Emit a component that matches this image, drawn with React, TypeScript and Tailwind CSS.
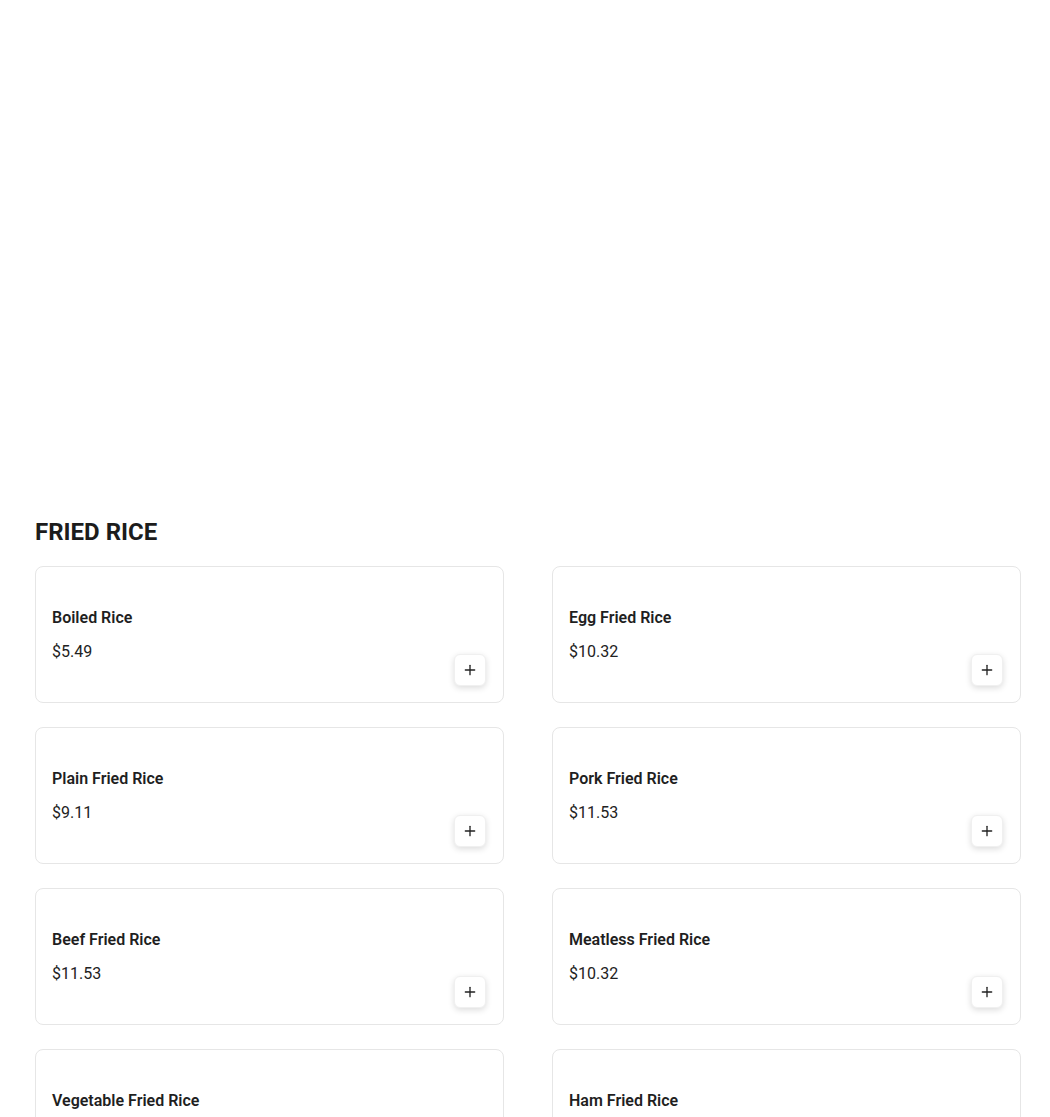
import { Plus } from 'lucide-react';

const items = [
  { name: 'Boiled Rice', price: '$5.49' },
  { name: 'Egg Fried Rice', price: '$10.32' },
  { name: 'Plain Fried Rice', price: '$9.11' },
  { name: 'Pork Fried Rice', price: '$11.53' },
  { name: 'Beef Fried Rice', price: '$11.53' },
  { name: 'Meatless Fried Rice', price: '$10.32' },
  { name: 'Vegetable Fried Rice', price: '$8.50' },
  { name: 'Ham Fried Rice', price: '$10.32' },
];

function MenuCard({ name, price }: { name: string; price: string }) {
  return (
    <div className="flex items-end justify-between rounded-lg border border-[#e6e6e6] bg-white py-4 pl-4 pr-[17px]">
      <div className="pt-[23px] pb-[22px]">
        <h3 className="text-base leading-6 font-semibold text-[#1f1f1f]">{name}</h3>
        <p className="mt-[10px] text-base leading-6 text-[#222]">{price}</p>
      </div>
      <button className="flex h-8 w-8 items-center justify-center rounded-md bg-white shadow-[0_2px_6px_rgba(0,0,0,0.14)] border border-[#f0f0f0]">
        <Plus className="h-4 w-4 text-[#222]" strokeWidth={2} />
      </button>
    </div>
  );
}

export default function App() {
  return (
    <div className="min-h-screen bg-white font-['Roboto',sans-serif] text-[#1f1f1f]">
      {/* hero area left blank */}
      <div className="h-[516px]" />
      <section className="pl-[35px] pr-[29px]">
        <h2 className="text-2xl leading-8 font-bold text-[#1c1c1c]">FRIED RICE</h2>
        <div className="mt-[18px] grid grid-cols-2 gap-x-12 gap-y-6 pb-10">
          {items.map(item => (
            <MenuCard key={item.name} {...item} />
          ))}
        </div>
      </section>
    </div>
  );
}
